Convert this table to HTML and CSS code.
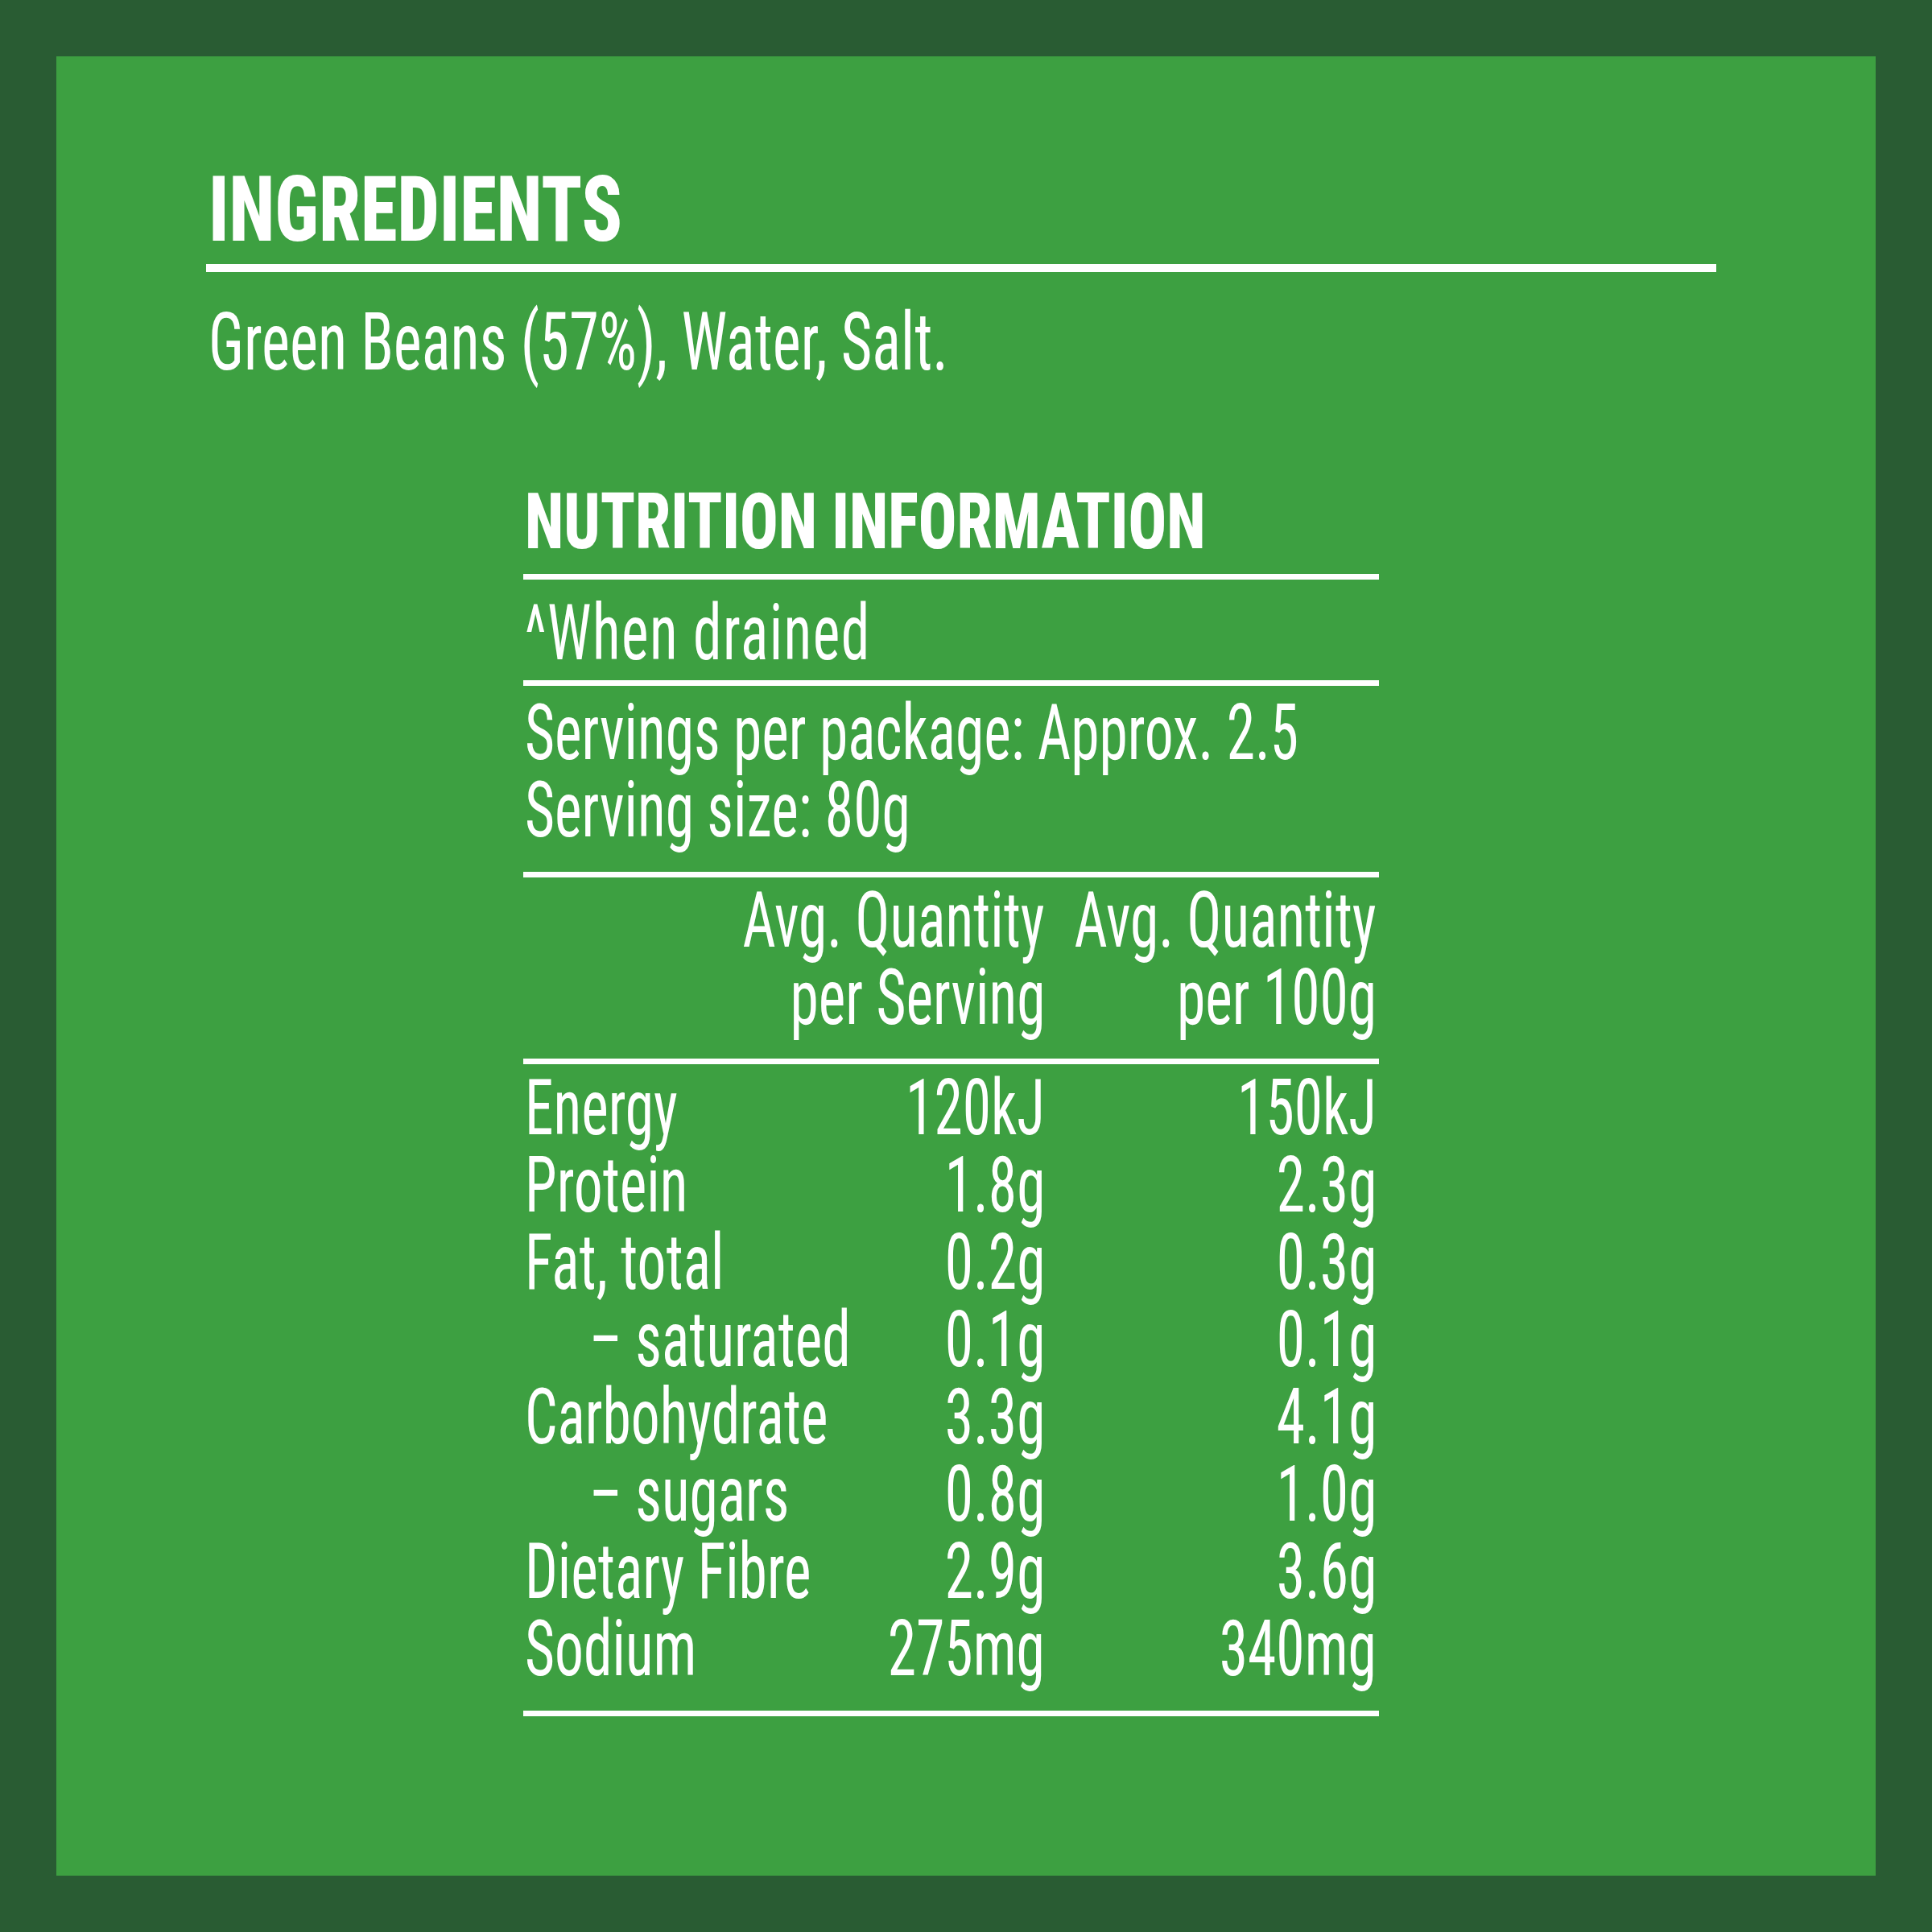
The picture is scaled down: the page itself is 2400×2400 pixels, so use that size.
FILE: index.html
```html
<!DOCTYPE html>
<html lang="en">
<head>
<meta charset="utf-8">
<title>Green Beans – Ingredients &amp; Nutrition Information</title>
<link rel="stylesheet" href="styles.css">
</head>
<body>
<div class="frame">
  <main class="panel">
    <h2 class="ing-title"><span class="sx head-sx">INGREDIENTS</span></h2>
    <div class="rule rule-thick"></div>
    <p class="ing-text"><span class="sx">Green Beans (57%), Water, Salt.</span></p>

    <section class="nip">
      <h2 class="nip-title"><span class="sx head-sx">NUTRITION INFORMATION</span></h2>
      <div class="rule"></div>
      <p class="note"><span class="sx">^When drained</span></p>
      <div class="rule"></div>
      <div class="servings">
        <div class="line"><span class="sx">Servings per package: Approx. 2.5</span></div>
        <div class="line"><span class="sx">Serving size: 80g</span></div>
      </div>
      <div class="rule"></div>
      <div class="grid grid-head">
        <div class="cell"></div>
        <div class="cell num">
          <div class="line"><span class="sx r">Avg. Quantity</span></div>
          <div class="line"><span class="sx r">per Serving</span></div>
        </div>
        <div class="cell num">
          <div class="line"><span class="sx r">Avg. Quantity</span></div>
          <div class="line"><span class="sx r">per 100g</span></div>
        </div>
      </div>
      <div class="rule"></div>
      <div class="grid grid-body">
        <div class="cell"><span class="sx">Energy</span></div>
        <div class="cell num"><span class="sx r">120kJ</span></div>
        <div class="cell num"><span class="sx r">150kJ</span></div>

        <div class="cell"><span class="sx">Protein</span></div>
        <div class="cell num"><span class="sx r">1.8g</span></div>
        <div class="cell num"><span class="sx r">2.3g</span></div>

        <div class="cell"><span class="sx">Fat, total</span></div>
        <div class="cell num"><span class="sx r">0.2g</span></div>
        <div class="cell num"><span class="sx r">0.3g</span></div>

        <div class="cell sub"><span class="sx">– saturated</span></div>
        <div class="cell num"><span class="sx r">0.1g</span></div>
        <div class="cell num"><span class="sx r">0.1g</span></div>

        <div class="cell"><span class="sx">Carbohydrate</span></div>
        <div class="cell num"><span class="sx r">3.3g</span></div>
        <div class="cell num"><span class="sx r">4.1g</span></div>

        <div class="cell sub"><span class="sx">– sugars</span></div>
        <div class="cell num"><span class="sx r">0.8g</span></div>
        <div class="cell num"><span class="sx r">1.0g</span></div>

        <div class="cell"><span class="sx">Dietary Fibre</span></div>
        <div class="cell num"><span class="sx r">2.9g</span></div>
        <div class="cell num"><span class="sx r">3.6g</span></div>

        <div class="cell"><span class="sx">Sodium</span></div>
        <div class="cell num"><span class="sx r">275mg</span></div>
        <div class="cell num"><span class="sx r">340mg</span></div>
      </div>
      <div class="rule"></div>
    </section>
  </main>
</div>
</body>
</html>
```
FILE: styles.css
```css
html, body {
  margin: 0;
  padding: 0;
}
body {
  background: #295c33;
  font-family: Roboto, "Liberation Sans", sans-serif;
  font-stretch: 75%;
  color: #ffffff;
}
.frame {
  padding: 70px;
  width: 2400px;
  height: 2400px;
  box-sizing: border-box;
}
.panel {
  background: #3da041;
  height: 2260px;
  box-sizing: border-box;
  padding: 133px 198px 0 186px;
}

/* condensed glyph rendering */
.sx {
  display: inline-block;
  white-space: nowrap;
  transform: scaleX(0.745);
  transform-origin: 0 50%;
}
.sx.r {
  transform-origin: 100% 50%;
}
.head-sx {
  transform: scaleX(0.815);
}
.ing-text .sx {
  transform: scaleX(0.738);
}
.note .sx {
  transform: scaleX(0.745);
  letter-spacing: 2px;
}

.rule {
  height: 7px;
  background: #ffffff;
}
.rule-thick {
  height: 10px;
  margin-top: 11px;
}

.ing-title {
  margin: 0;
  padding-left: 3px;
  font-size: 114px;
  line-height: 114px;
  font-weight: 800;
}
.ing-text {
  margin: 36px 0 0;
  padding-left: 3px;
  font-size: 101px;
  line-height: 101px;
  font-weight: 400;
}

.nip {
  width: 1063px;
  margin: 125px 0 0 394px;
  font-size: 96px;
  line-height: 96px;
  font-weight: 400;
}
.nip-title {
  margin: 0;
  padding-left: 2px;
  font-size: 97px;
  line-height: 97px;
  font-weight: 800;
}
.nip-title + .rule {
  margin-top: 16px;
}
.note {
  margin: 18px 0 11px;
  padding-left: 2px;
}
.servings {
  margin: 10px 0 29px;
  padding-left: 2px;
}
.grid {
  display: grid;
  grid-template-columns: minmax(0, 1fr) 380px 380px;
  column-gap: 32px;
  padding: 0 3px 0 2px;
}
.grid-head {
  margin: 5px 0 28px;
}
.grid-body {
  margin: 6px 0 29px;
}
.cell {
  white-space: nowrap;
  height: 96px;
}
.grid-head .cell {
  height: 192px;
}
.num {
  display: flex;
  flex-direction: column;
  align-items: flex-end;
}
.num .line {
  height: 96px;
}
.sub {
  padding-left: 80px;
}
```
